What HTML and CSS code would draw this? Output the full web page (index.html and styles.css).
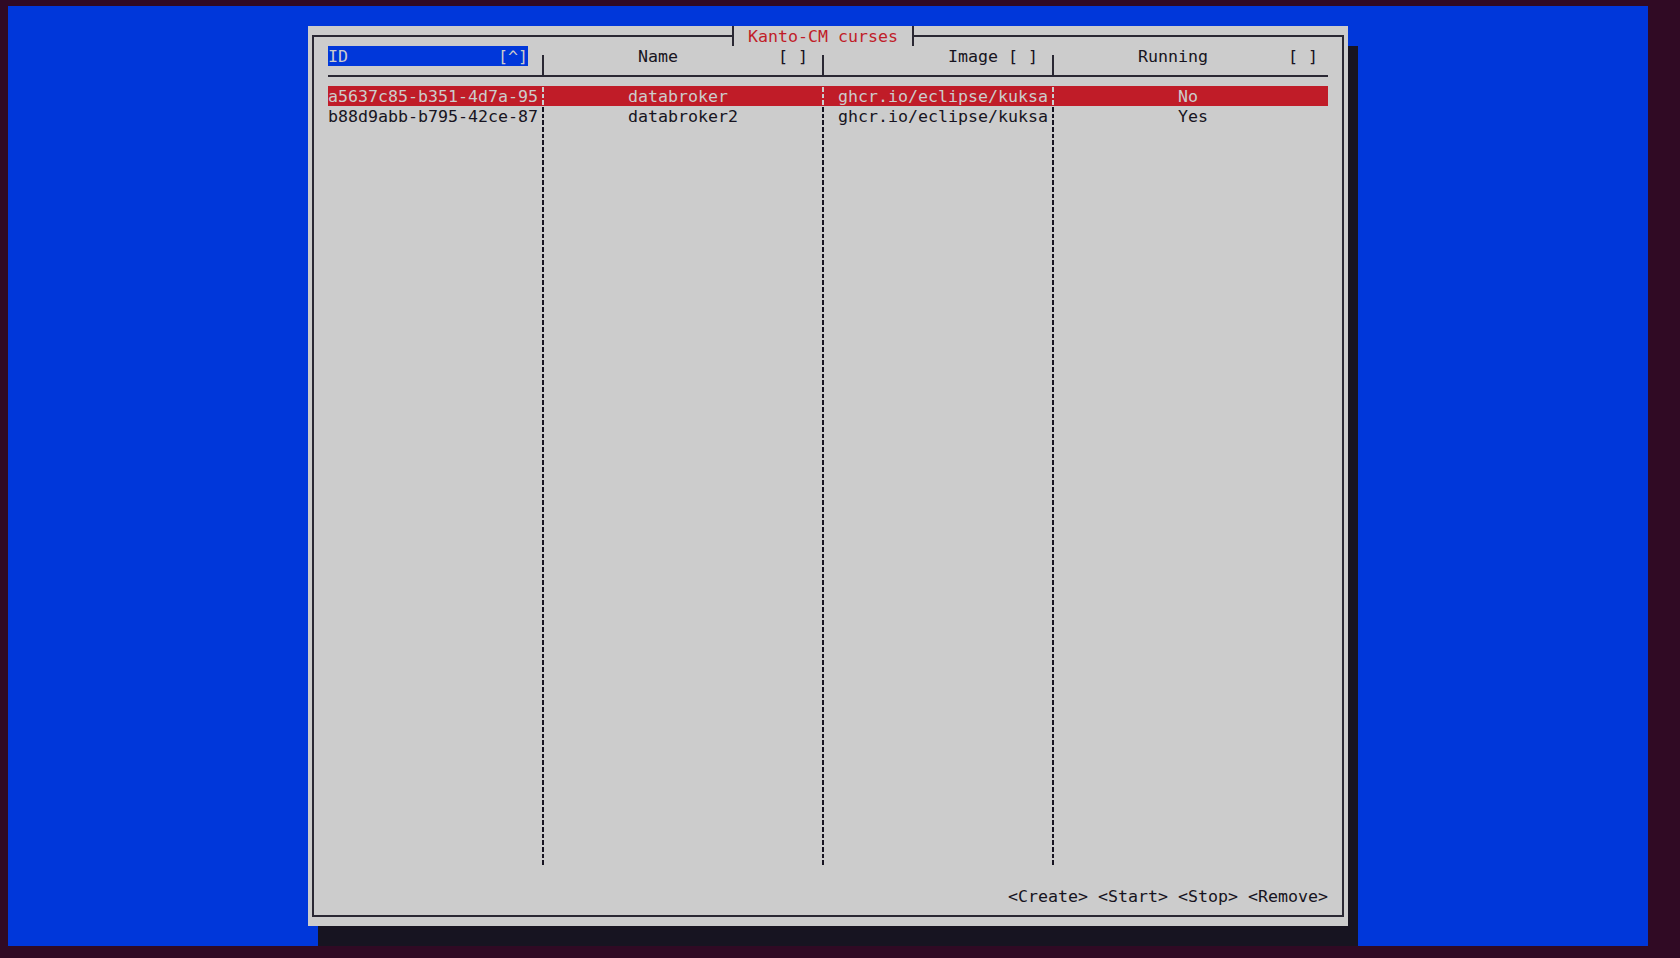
FILE: index.html
```html
<!DOCTYPE html>
<html lang="en">
<head>
<meta charset="utf-8">
<title>Kanto-CM curses</title>
<link rel="stylesheet" href="styles.css">
</head>
<body>
<div class="screen">
  <div class="dialog">
    <div class="frame">
      <div class="title">Kanto-CM curses</div>
      <div class="table">
        <div class="row head">
          <div class="cell"><span class="hd-active">ID               [^]</span></div>
          <div class="hsep"><span class="vline"></span></div>
          <div class="cell">         Name          [ ]</div>
          <div class="hsep"><span class="vline"></span></div>
          <div class="cell">            Image [ ]</div>
          <div class="hsep"><span class="vline"></span></div>
          <div class="cell">        Running        [ ]</div>
        </div>
        <div class="rule"></div>
        <div class="row selected">
          <div class="cell">a5637c85-b351-4d7a-95</div>
          <div class="sep"></div>
          <div class="cell">        databroker</div>
          <div class="sep"></div>
          <div class="cell"> ghcr.io/eclipse/kuksa</div>
          <div class="sep"></div>
          <div class="cell">            No</div>
        </div>
        <div class="row">
          <div class="cell">b88d9abb-b795-42ce-87</div>
          <div class="sep"></div>
          <div class="cell">        databroker2</div>
          <div class="sep"></div>
          <div class="cell"> ghcr.io/eclipse/kuksa</div>
          <div class="sep"></div>
          <div class="cell">            Yes</div>
        </div>
        <div class="row filler">
          <div class="cell"></div>
          <div class="sep"></div>
          <div class="cell"></div>
          <div class="sep"></div>
          <div class="cell"></div>
          <div class="sep"></div>
          <div class="cell"></div>
        </div>
      </div>
      <div class="actions">&lt;Create&gt; &lt;Start&gt; &lt;Stop&gt; &lt;Remove&gt;</div>
    </div>
  </div>
</div>
</body>
</html>
```

FILE: styles.css
```css
html, body {
  margin: 0;
  padding: 0;
  background: #300a24;
  width: 1680px;
  height: 958px;
  overflow: hidden;
}

body {
  font-family: "DejaVu Sans Mono", "Liberation Mono", monospace;
  font-size: 16.61px;
  line-height: 22px;
  color: #171421;
}

.screen {
  box-sizing: border-box;
  margin: 6px 0 0 8px;
  width: 1640px;
  height: 940px;
  background: #0037da;
  padding: 20px 0 0 300px;
}

.dialog {
  box-sizing: border-box;
  width: 1040px;
  height: 900px;
  background: #cccccc;
  padding: 9px 4px;
  box-shadow: 10px 20px 0 #171421;
}

.frame {
  box-sizing: border-box;
  position: relative;
  height: 100%;
  border: 2px solid #2a2833;
  padding: 9px 14px;
  display: flex;
  flex-direction: column;
}

.title {
  position: absolute;
  left: 418px;
  top: -11px;
  height: 20px;
  padding: 0 14px;
  border-left: 2px solid #2a2833;
  border-right: 2px solid #2a2833;
  background: #cccccc;
  color: #c01c28;
  white-space: pre;
}

.table {
  display: flex;
  flex-direction: column;
  width: 1000px;
}

.row {
  display: grid;
  grid-template-columns: 210px 10px 270px 10px 220px 10px 270px;
  grid-template-rows: 20px;
  height: 20px;
}

.cell {
  white-space: pre;
}

.hd-active {
  display: inline-block;
  vertical-align: top;
  box-sizing: border-box;
  width: 200px;
  height: 20px;
  background: #0037da;
  color: #cccccc;
}

.hsep {
  display: flex;
  justify-content: center;
}

.vline {
  width: 2px;
  height: 21px;
  margin-top: 9px;
  background: #2a2833;
}

.rule {
  height: 20px;
  background: linear-gradient(#2a2833, #2a2833) 0 9px / 100% 2px no-repeat;
}

.sep {
  background-image: repeating-linear-gradient(to bottom,
    transparent 0, transparent 1px,
    currentColor 1px, currentColor 5.67px,
    transparent 5.67px, transparent 6.667px);
  background-size: 2px 100%;
  background-position: 4px 0;
  background-repeat: no-repeat;
}

.selected {
  background: #c01c28;
  color: #cccccc;
}

.filler {
  grid-template-rows: 740px;
  height: 740px;
}

.actions {
  margin-top: auto;
  height: 20px;
  text-align: right;
  white-space: pre;
}
```
